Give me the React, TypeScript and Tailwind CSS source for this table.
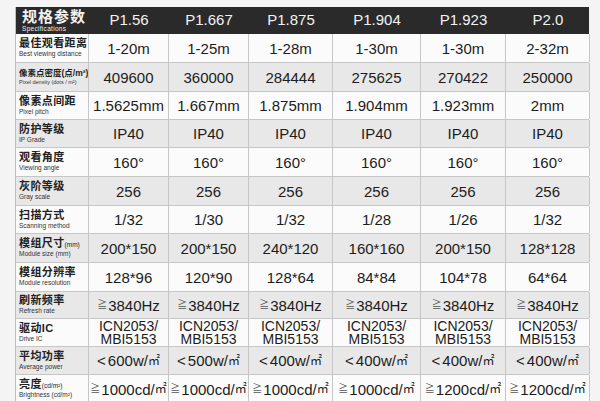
const models = ["P1.56", "P1.667", "P1.875", "P1.904", "P1.923", "P2.0"];

type Row = { zh: string; zhSub?: string; small?: boolean; en: string; values: string[]; h: string };

const rows: Row[] = [
  { zh: "最佳观看距离", en: "Best viewing distance", values: ["1-20m", "1-25m", "1-28m", "1-30m", "1-30m", "2-32m"], h: "h-[29px]" },
  { zh: "像素点密度(点/m²)", small: true, en: "Pixel density (dots / m²)", values: ["409600", "360000", "284444", "275625", "270422", "250000"], h: "h-[29px]" },
  { zh: "像素点间距", en: "Pixel pitch", values: ["1.5625mm", "1.667mm", "1.875mm", "1.904mm", "1.923mm", "2mm"], h: "h-[28px]" },
  { zh: "防护等级", en: "IP Grade", values: Array(6).fill("IP40"), h: "h-[28px]" },
  { zh: "观看角度", en: "Viewing angle", values: Array(6).fill("160°"), h: "h-[29px]" },
  { zh: "灰阶等级", en: "Gray scale", values: Array(6).fill("256"), h: "h-[29px]" },
  { zh: "扫描方式", en: "Scanning method", values: ["1/32", "1/30", "1/32", "1/28", "1/26", "1/32"], h: "h-[28px]" },
  { zh: "模组尺寸", zhSub: "(mm)", en: "Module size (mm)", values: ["200*150", "200*150", "240*120", "160*160", "200*150", "128*128"], h: "h-[29px]" },
  { zh: "模组分辨率", en: "Module resolution", values: ["128*96", "120*90", "128*64", "84*84", "104*78", "64*64"], h: "h-[29px]" },
  { zh: "刷新频率", en: "Refresh rate", values: Array(6).fill("≧3840Hz"), h: "h-[27px]" },
  { zh: "驱动IC", en: "Drive IC", values: Array(6).fill("ICN2053/\nMBI5153"), h: "h-[28px]" },
  { zh: "平均功率", en: "Average power", values: ["<600w/㎡", "<500w/㎡", "<400w/㎡", "<400w/㎡", "<400w/㎡", "<400w/㎡"], h: "h-[28px]" },
  { zh: "亮度", zhSub: "(cd/m²)", en: "Brightness (cd/m²)", values: ["≧1000cd/㎡", "≧1000cd/㎡", "≧1000cd/㎡", "≧1000cd/㎡", "≧1200cd/㎡", "≧1200cd/㎡"], h: "h-[29px]" },
];

const cols = "grid grid-cols-[73px_80px_80px_84px_88px_85px_84px]";

// splits symbols so they can be drawn narrower, like the source sheet
function Value({ v }: { v: string }) {
  if (v.includes("\n")) return <>{v}</>;
  let lead: React.ReactNode = null;
  let body = v;
  if (body.startsWith("≧")) {
    lead = <span className="text-[10px] text-[#555] mr-[1px]">≧</span>;
    body = body.slice(1);
  } else if (body.startsWith("<")) {
    lead = <span className="mr-[2px]">&lt;</span>;
    body = body.slice(1);
  }
  const sq = body.endsWith("㎡");
  if (sq) body = body.slice(0, -1);
  return (
    <>
      {lead}
      {body}
      {sq && <span className="text-[12px]">㎡</span>}
    </>
  );
}

export default function App() {
  return (
    <div className="w-[600px] h-[401px] overflow-hidden bg-[#f4f4f4] pt-[7px] pl-[15px] font-['Liberation_Sans','Noto_Sans_CJK_SC',sans-serif]">
      <div className="w-[574px] border-l border-[#bdbdbd]">
        {/* header */}
        <div className={`${cols} h-[27px] bg-[#2a2a2a] text-[#f2f2f2]`}>
          <div className="flex flex-col justify-center pl-[6px] leading-none">
            <span className="text-[15px] font-bold tracking-[1px]">规格参数</span>
            <span className="text-[6.5px] mt-[2px] tracking-[0.3px]">Specifications</span>
          </div>
          {models.map((m) => (
            <div key={m} className="flex items-center justify-center text-[15px]">{m}</div>
          ))}
        </div>

        {rows.map((r, i) => (
          <div
            key={r.zh}
            className={`${cols} ${r.h} border-b border-[#c6c6c6] ${i % 2 ? "bg-[#e8e8e8]" : "bg-[#fbfbfb]"}`}
          >
            <div className="flex flex-col justify-center pl-[3px] border-r border-[#c6c6c6] text-[#222] leading-none overflow-hidden">
              <span
                className={`font-bold whitespace-nowrap ${
                  r.small ? "text-[8.5px] tracking-[0px]" : "text-[11px] tracking-[0.4px]"
                }`}
              >
                {r.zh}
                {r.zhSub && <span className="text-[6.5px] font-normal tracking-normal">{r.zhSub}</span>}
              </span>
              <span className={`${r.small ? "text-[5.5px]" : "text-[6.5px]"} mt-[2px] whitespace-nowrap text-[#333]`}>{r.en}</span>
            </div>
            {r.values.map((v, j) => (
              <div
                key={j}
                className={`flex items-center justify-center text-center whitespace-pre border-r border-[#c6c6c6] text-[#1c1c1c] ${
                  v.includes("\n") ? "text-[14px] leading-[13px]" : "text-[15px] leading-none"
                }`}
              >
                <Value v={v} />
              </div>
            ))}
          </div>
        ))}
      </div>
    </div>
  );
}
